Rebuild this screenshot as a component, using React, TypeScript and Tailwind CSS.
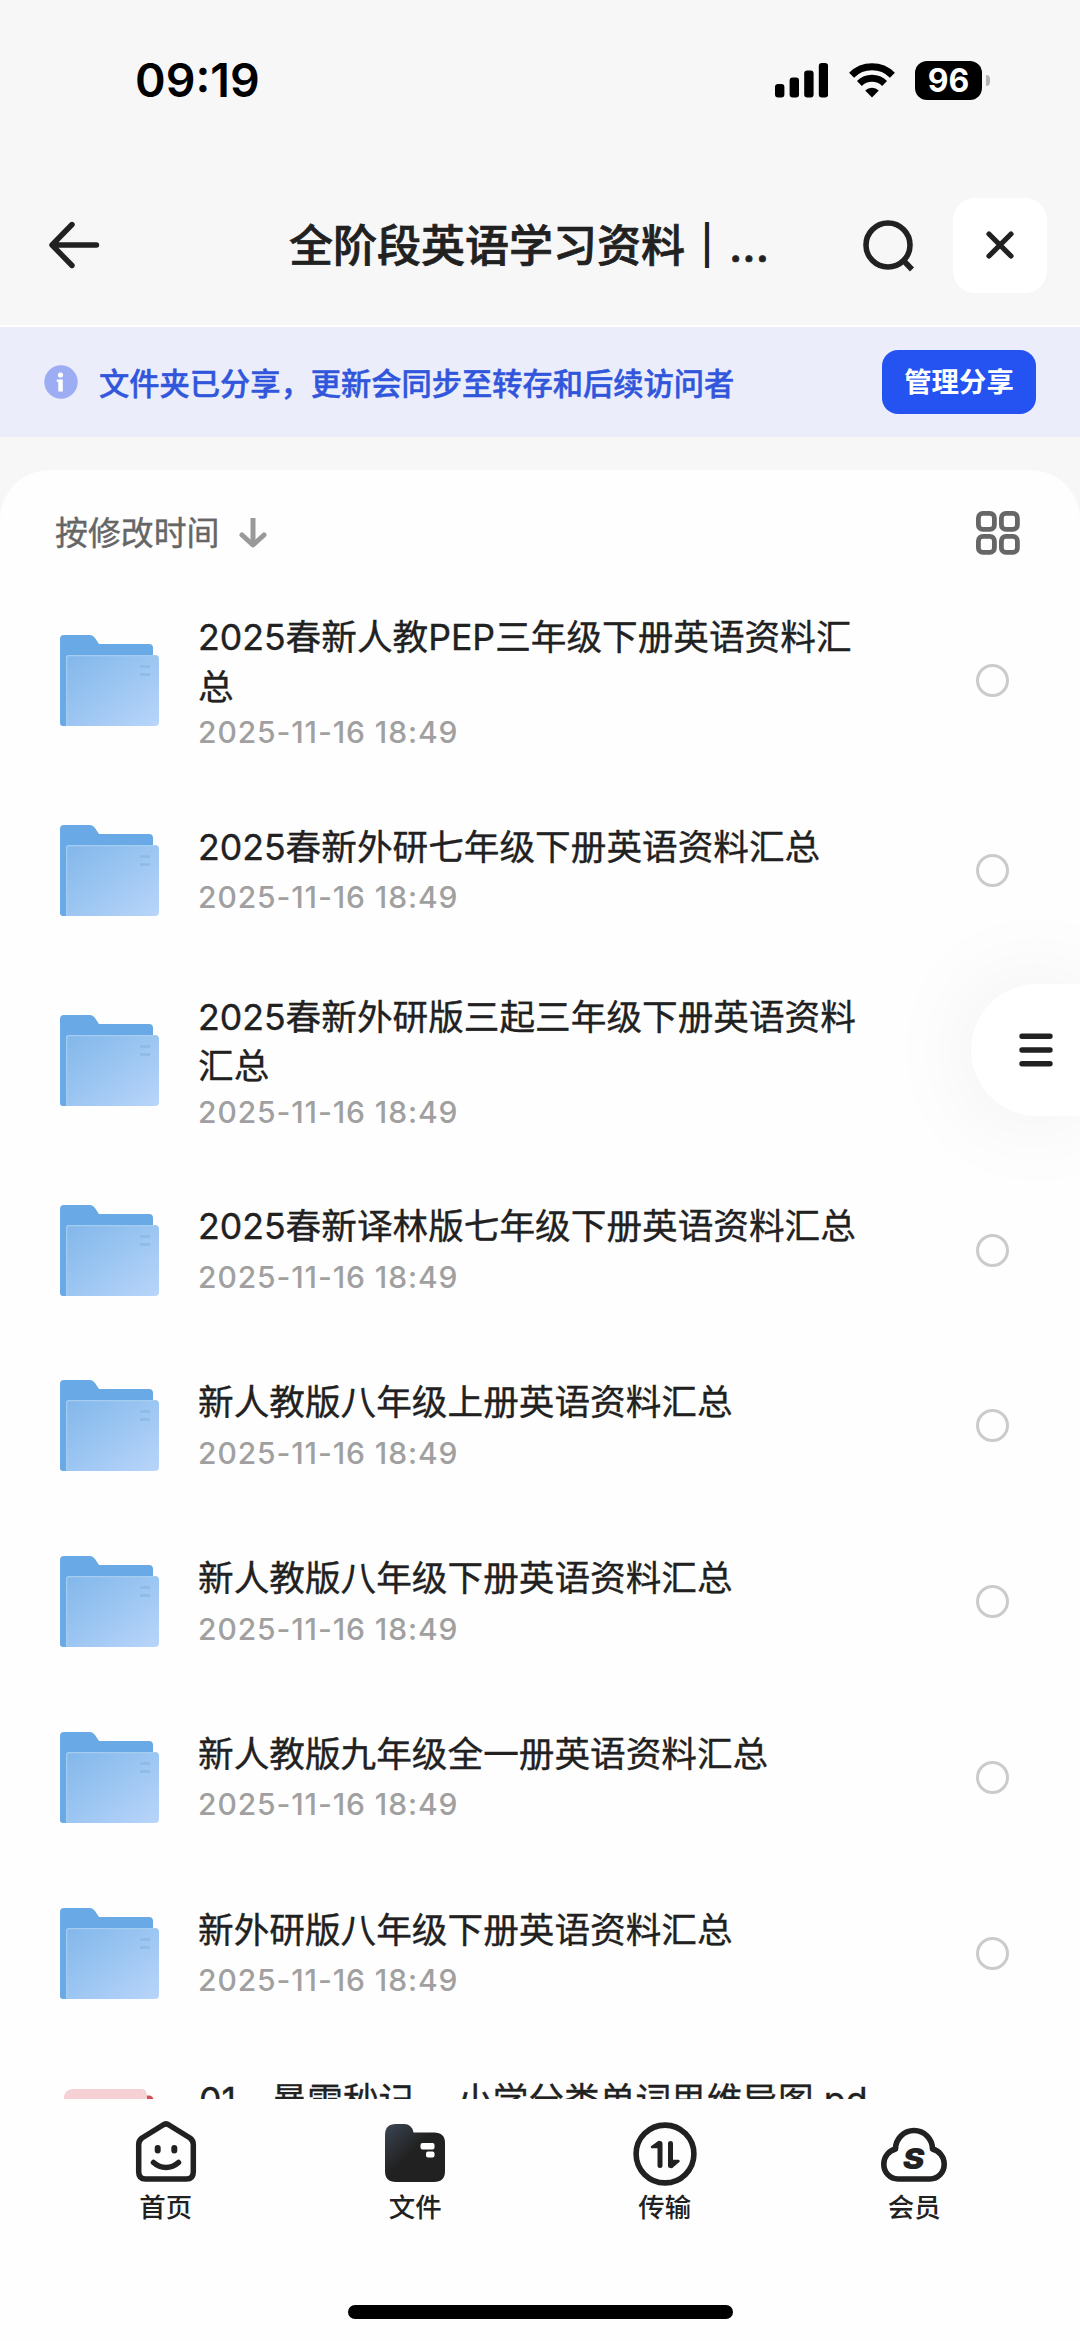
import type { ReactNode } from 'react';

interface FolderEntry {
  name: string;
  date: string;
  tall?: boolean;
}

const folders: FolderEntry[] = [
  { name: '2025春新人教PEP三年级下册英语资料汇总', date: '2025-11-16 18:49', tall: true },
  { name: '2025春新外研七年级下册英语资料汇总', date: '2025-11-16 18:49' },
  { name: '2025春新外研版三起三年级下册英语资料汇总', date: '2025-11-16 18:49', tall: true },
  { name: '2025春新译林版七年级下册英语资料汇总', date: '2025-11-16 18:49' },
  { name: '新人教版八年级上册英语资料汇总', date: '2025-11-16 18:49' },
  { name: '新人教版八年级下册英语资料汇总', date: '2025-11-16 18:49' },
  { name: '新人教版九年级全一册英语资料汇总', date: '2025-11-16 18:49' },
  { name: '新外研版八年级下册英语资料汇总', date: '2025-11-16 18:49' },
];

function StatusBar() {
  return (
    <div className="flex h-[161px] items-start justify-between pl-[135px] pr-[90px] pt-[61px]">
      <span className="text-[46.5px] leading-[39px] font-semibold text-black">09:19</span>
      <div className="flex items-center">
        <svg width="53" height="35" viewBox="0 0 53 35">
          <rect x="0" y="21" width="9.4" height="13.5" rx="3" />
          <rect x="14.6" y="14.5" width="9.4" height="20" rx="3" />
          <rect x="29.2" y="7.5" width="9.4" height="27" rx="3" />
          <rect x="43.8" y="0" width="9.4" height="34.5" rx="3" />
        </svg>
        <svg className="ml-[21px]" width="46" height="35" viewBox="0 0 46 35" fill="none" stroke="black" strokeWidth="7">
          <path d="M2.6 12.2 A29 29 0 0 1 43.4 12.2" />
          <path d="M10.4 20.4 A18 18 0 0 1 35.6 20.4" />
          <path d="M16.2 27.6 A9.6 9.6 0 0 1 29.8 27.6 L23 34.6 Z" fill="black" stroke="none" />
        </svg>
        <div className="ml-[20px] flex h-[39px] w-[67px] items-center justify-center rounded-[12px] bg-black text-[32px] leading-none font-bold text-white">
          96
        </div>
        <div className="ml-[4px] h-[11px] w-[4px] rounded-r-full bg-[#b4b4b4]" />
      </div>
    </div>
  );
}

function Header() {
  return (
    <div className="flex h-[166px] items-center border-b-2 border-white pt-[4px] pl-[49px] pr-[33px]">
      <svg width="51" height="48" viewBox="0 0 51 48" fill="none" stroke="#212121" strokeWidth="5.4" strokeLinecap="round" strokeLinejoin="round">
        <path d="M23 3.5 L3 24 L23 44.5 M3.5 24 H47.5" />
      </svg>
      <h1 className="ml-[189px] w-[500px] pt-[2px] text-[44px] leading-[60px] font-medium whitespace-nowrap text-[#212121] [-webkit-text-stroke:0.7px_#212121]">
        全阶段英语学习资料<span className="[-webkit-text-stroke:2px_#212121]">｜</span>...
      </h1>
      <svg className="ml-[73px]" width="54" height="54" viewBox="0 0 54 54" fill="none" stroke="#212121" strokeWidth="5.6">
        <circle cx="26" cy="27" r="22" />
        <path d="M41 42 L50 51.5" />
      </svg>
      <div className="ml-auto flex h-[95px] w-[94px] items-center justify-center rounded-[22px] bg-white">
        <svg width="28" height="30" viewBox="0 0 28 30" stroke="#212121" strokeWidth="5.2" strokeLinecap="round">
          <path d="M3 4 L25 26 M25 4 L3 26" />
        </svg>
      </div>
    </div>
  );
}

function ShareBanner() {
  return (
    <div className="flex h-[110px] items-center bg-[#ebedfa] pr-[44px] pb-[1px] pl-[44px]">
      <svg width="34" height="34" viewBox="0 0 34 34">
        <circle cx="17" cy="17" r="16.7" fill="#9dadf3" />
        <circle cx="16.5" cy="10" r="2.6" fill="white" />
        <path d="M12.8 14.5 H18.8 V26.5 H14.3 V17 H12.8 Z" fill="white" />
      </svg>
      <p className="ml-[21px] pt-[4px] text-[30.25px] leading-[40px] font-medium whitespace-nowrap text-[#3156dc] [-webkit-text-stroke:0.5px_#3156dc]">
        文件夹已分享，更新会同步至转存和后续访问者
      </p>
      <button className="ml-auto h-[64px] w-[154px] rounded-[16px] bg-[#2453f1] pt-[2px] text-[27.4px] font-bold whitespace-nowrap text-white">
        管理分享
      </button>
    </div>
  );
}

function SortBar() {
  return (
    <div className="flex h-[109px] shrink-0 items-center pt-[17px] pr-[59px] pl-[55px]">
      <span className="text-[32.9px] leading-[44px] text-[#666666] [-webkit-text-stroke:0.4px_#666666]">按修改时间</span>
      <svg className="ml-[20px]" width="28" height="30" viewBox="0 0 28 30" fill="none" stroke="#999999" strokeWidth="5">
        <path d="M14 0 V26" />
        <path d="M3 17 L14 27 L25 17" strokeLinecap="round" strokeLinejoin="round" />
      </svg>
      <svg className="ml-auto" width="46" height="46" viewBox="0 0 46 46" fill="none" stroke="#666666" strokeWidth="4.8">
        <rect x="3.4" y="3.4" width="16" height="16" rx="4.5" />
        <rect x="26.4" y="3.4" width="16" height="16" rx="4.5" />
        <rect x="3.4" y="26.4" width="16" height="16" rx="4.5" />
        <rect x="26.4" y="26.4" width="16" height="16" rx="4.5" />
      </svg>
    </div>
  );
}

function FolderIcon() {
  return (
    <svg className="shrink-0" width="99" height="91" viewBox="0 0 99 91">
      <defs>
        <linearGradient id="folderFront" x1="0" y1="0" x2="1" y2="1">
          <stop offset="0" stopColor="#82b7ea" />
          <stop offset="0.5" stopColor="#9cc6f2" />
          <stop offset="1" stopColor="#b9d5fa" />
        </linearGradient>
      </defs>
      <path d="M0 4 Q0 0 4 0 H30 Q33 0 35 3 L39 9 H89 Q93 9 93 13 V60 H10 V91 H3 Q0 91 0 88 Z" fill="#68a9e6" />
      <path d="M6 23 Q6 20 9 20 H95 Q99 20 99 24 V87 Q99 91 95 91 H6 Z" fill="url(#folderFront)" />
      <path d="M6.7 91 V23 Q6.7 20.7 9 20.7 H95" fill="none" stroke="#a5cdf2" strokeWidth="1.2" />
      <path d="M80 31.5 H90 M80 39.5 H90" stroke="#8fb9e6" strokeWidth="2.4" />
    </svg>
  );
}

function FolderRow({ entry }: { entry: FolderEntry }) {
  return (
    <div className={`flex shrink-0 items-center pr-[71px] pl-[60px] ${entry.tall ? 'h-[203.6px]' : 'h-[175.9px]'}`}>
      <FolderIcon />
      <div className={`ml-[39px] w-[672px] ${entry.tall ? 'pt-[5px]' : ''}`}>
        <div className="text-[35.65px] leading-[49.5px] break-all text-[#212121] [-webkit-text-stroke:0.35px_#212121]">
          {entry.name}
        </div>
        <div className={`text-[30px] leading-[41px] font-medium tracking-[0.9px] text-[#a0a0a0] ${entry.tall ? '' : 'mt-[5px]'}`}>
          {entry.date}
        </div>
      </div>
      <span className="ml-auto size-[33px] rounded-full border-[3px] border-[#cbcbcb]" />
    </div>
  );
}

function PdfRow() {
  return (
    <div className="flex h-[204px] shrink-0 items-start pl-[64px]">
      <svg className="mt-[47px] shrink-0" width="90" height="116" viewBox="0 0 90 116">
        <path d="M0 7 Q2 0 9 0 H78 Q82 0 83 6 V116 H0 Z" fill="#f5d0d4" />
        <path d="M83 6.5 H86 Q90 8 90 13 V40 H83 Z" fill="#d25055" />
      </svg>
      <div className="ml-[45px] mt-[34px] text-[35.65px] leading-[49.5px] whitespace-nowrap text-[#212121] [-webkit-text-stroke:0.35px_#212121]">
        01、暴雪秒记<span className="inline-block w-[43px]">__</span>小学分类单词思维导图.pd
      </div>
    </div>
  );
}

function TabItem({ label, children }: { label: string; children: ReactNode }) {
  return (
    <div className="flex flex-col items-center">
      <div className="flex h-[72px] items-center">{children}</div>
      <span className="mt-[5px] text-[26.4px] leading-[36px] font-medium text-[#212121]">{label}</span>
    </div>
  );
}

function TabBar() {
  return (
    <nav className="grid grid-cols-4 bg-[#fefefe] px-[41px] pt-[13px]">
      <TabItem label="首页">
        <svg width="72" height="72" viewBox="0 0 72 72" fill="none" stroke="#212121" strokeWidth="5.5" strokeLinecap="round" strokeLinejoin="round">
          <path d="M33 13 Q36 10.8 39 13 L60 26 Q63.3 28.5 63.3 32.5 V60 Q63.3 67 56.3 67 H15.7 Q8.7 67 8.7 60 V32.5 Q8.7 28.5 12 26 Z" />
          <path d="M27.7 36 V38.5 M44.3 36 V38.5" strokeWidth="6" />
          <path d="M23.5 50.5 Q29 55.5 36 55.5 Q43 55.5 48.5 50.5" />
        </svg>
      </TabItem>
      <TabItem label="文件">
        <svg width="72" height="72" viewBox="0 0 72 72">
          <defs>
            <linearGradient id="tabFolder" x1="0" y1="0.1" x2="0.6" y2="0.7">
              <stop offset="0" stopColor="#39424f" />
              <stop offset="0.7" stopColor="#212121" />
            </linearGradient>
          </defs>
          <path d="M6 23 Q6 12 17 12 H25 Q33 12 34.5 20.5 H55 Q66 20.5 66 31 V59 Q66 70 55 70 H17 Q6 70 6 59 Z" fill="url(#tabFolder)" />
          <rect x="41.5" y="31" width="14" height="6.5" rx="2" fill="white" />
          <rect x="47" y="39.5" width="8.5" height="6" rx="2" fill="white" />
        </svg>
      </TabItem>
      <TabItem label="传输">
        <svg className="overflow-visible" width="72" height="72" viewBox="0 0 72 72" fill="none" stroke="#212121" strokeLinecap="round" strokeLinejoin="round">
          <circle cx="36" cy="42" r="28.9" strokeWidth="5.6" />
          <path d="M31 31.5 V53.5 M41.5 31.5 V53.5" strokeWidth="5" />
          <path d="M30 30 L23 35 H30 Z M42.5 55 L49.5 49 H42.5 Z" strokeWidth="2.5" fill="#212121" />
        </svg>
      </TabItem>
      <TabItem label="会员">
        <svg width="72" height="72" viewBox="0 0 72 72" fill="none" stroke="#212121" strokeWidth="5.6">
          <path d="M17.5 37 A18.5 18.5 0 1 1 54.5 37 C61.5 39 66.2 45 66.2 52 C66.2 60.5 60 67 52 67 H20 C12 67 5.8 60.5 5.8 52 C5.8 45 10.5 39 17.5 37 Z" strokeLinejoin="round" />
          <text transform="translate(35.5 56.5) scale(1.12 1)" textAnchor="middle" fontSize="29" fontWeight="900" fontStyle="italic" fill="#212121" stroke="none">
            S
          </text>
        </svg>
      </TabItem>
    </nav>
  );
}

export default function App() {
  return (
    <div className="relative flex h-[2341px] w-[1080px] flex-col overflow-hidden bg-[#f7f7f7] font-['Inter','Noto_Sans_CJK_SC',sans-serif]">
      <StatusBar />
      <Header />
      <ShareBanner />
      <main className="mt-[33px] flex h-[1629px] flex-col overflow-hidden rounded-t-[50px] bg-[#fefefe]">
        <SortBar />
        {folders.map((entry) => (
          <FolderRow key={entry.name} entry={entry} />
        ))}
        <PdfRow />
      </main>
      <div className="flex flex-1 flex-col justify-between bg-[#fefefe] pb-[22px]">
        <TabBar />
        <div className="mx-auto h-[14px] w-[385px] rounded-full bg-black" />
      </div>

      {/* Floating menu handle */}
      <button className="absolute top-[984px] right-0 flex h-[132px] w-[109px] items-center rounded-l-full bg-white pl-[48px] shadow-[0_0_100px_rgba(0,0,0,0.07)]">
        <svg width="34" height="34" viewBox="0 0 34 34" stroke="#212121" strokeWidth="5.4" strokeLinecap="round">
          <path d="M3 3.2 H31 M3 17 H31 M3 30.8 H31" />
        </svg>
      </button>
    </div>
  );
}
